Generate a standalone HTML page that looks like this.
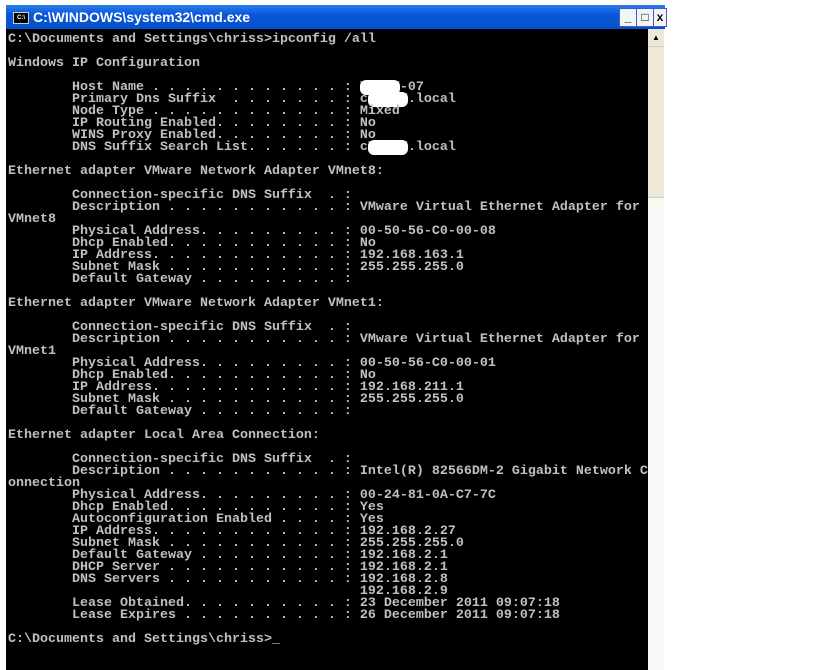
<!DOCTYPE html>
<html><head><style>
html,body{margin:0;padding:0;width:840px;height:670px;background:#fff;overflow:hidden;position:relative}
#title{position:absolute;left:6px;top:5px;width:659px;height:24px;background:linear-gradient(#2a7ef0,#0a56d8 40%,#0651cc);}
#title .t{position:absolute;left:27px;top:4px;color:#fff;font:bold 14px "Liberation Sans",sans-serif;}
#ico{position:absolute;left:7px;top:7px;width:14px;height:10px;background:#000;border:1px solid #ccc;color:#fff;font:bold 6px "Liberation Sans",sans-serif;line-height:10px;text-align:center}
.btn{position:absolute;top:3px;width:16px;height:17px;background:#f4f4f4;border:1px solid #3a5fc8;font:bold 12px "Liberation Sans",sans-serif;text-align:center;line-height:16px;color:#000}
#con{position:absolute;left:6px;top:29px;width:642px;height:641px;background:#000;}
pre{position:absolute;left:2px;top:5px;margin:0;color:#c0c0c0;font:bold 13.33px/12px "Liberation Mono",monospace;letter-spacing:0}
.r{background:#fff;border-radius:6px;color:#fff}
#sb{position:absolute;left:648px;top:29px;width:16px;height:641px;background:repeating-conic-gradient(#f4f0ea 0 25%,#fff 0 50%) 0 0/2px 2px}
#up{position:absolute;left:0;top:0;width:16px;height:17px;background:#ece9d8;border-bottom:1px solid #ccc;font-size:8px;text-align:center;line-height:17px}
#thumb{position:absolute;left:0;top:18px;width:16px;height:150px;background:#ece9d8;border-bottom:1px solid #ccc}
</style></head><body>
<div id="title"><div id="ico">C:\</div><div class="t">C:\WINDOWS\system32\cmd.exe</div>
<div class="btn" style="left:613px">_</div><div class="btn" style="left:630px">□</div><div class="btn" style="left:647px;width:12px">x</div></div>
<div id="con"><pre>C:\Documents and Settings\chriss&gt;ipconfig /all

Windows IP Configuration

        Host Name . . . . . . . . . . . . : <span class="r">XXXXX</span>-07
        Primary Dns Suffix  . . . . . . . : c<span class="r">XXXXX</span>.local
        Node Type . . . . . . . . . . . . : Mixed
        IP Routing Enabled. . . . . . . . : No
        WINS Proxy Enabled. . . . . . . . : No
        DNS Suffix Search List. . . . . . : c<span class="r">XXXXX</span>.local

Ethernet adapter VMware Network Adapter VMnet8:

        Connection-specific DNS Suffix  . :
        Description . . . . . . . . . . . : VMware Virtual Ethernet Adapter for
VMnet8
        Physical Address. . . . . . . . . : 00-50-56-C0-00-08
        Dhcp Enabled. . . . . . . . . . . : No
        IP Address. . . . . . . . . . . . : 192.168.163.1
        Subnet Mask . . . . . . . . . . . : 255.255.255.0
        Default Gateway . . . . . . . . . :

Ethernet adapter VMware Network Adapter VMnet1:

        Connection-specific DNS Suffix  . :
        Description . . . . . . . . . . . : VMware Virtual Ethernet Adapter for
VMnet1
        Physical Address. . . . . . . . . : 00-50-56-C0-00-01
        Dhcp Enabled. . . . . . . . . . . : No
        IP Address. . . . . . . . . . . . : 192.168.211.1
        Subnet Mask . . . . . . . . . . . : 255.255.255.0
        Default Gateway . . . . . . . . . :

Ethernet adapter Local Area Connection:

        Connection-specific DNS Suffix  . :
        Description . . . . . . . . . . . : Intel(R) 82566DM-2 Gigabit Network C
onnection
        Physical Address. . . . . . . . . : 00-24-81-0A-C7-7C
        Dhcp Enabled. . . . . . . . . . . : Yes
        Autoconfiguration Enabled . . . . : Yes
        IP Address. . . . . . . . . . . . : 192.168.2.27
        Subnet Mask . . . . . . . . . . . : 255.255.255.0
        Default Gateway . . . . . . . . . : 192.168.2.1
        DHCP Server . . . . . . . . . . . : 192.168.2.1
        DNS Servers . . . . . . . . . . . : 192.168.2.8
                                            192.168.2.9
        Lease Obtained. . . . . . . . . . : 23 December 2011 09:07:18
        Lease Expires . . . . . . . . . . : 26 December 2011 09:07:18

C:\Documents and Settings\chriss&gt;_</pre></div>
<div id="sb"><div id="up">▲</div><div id="thumb"></div></div>
</body></html>
